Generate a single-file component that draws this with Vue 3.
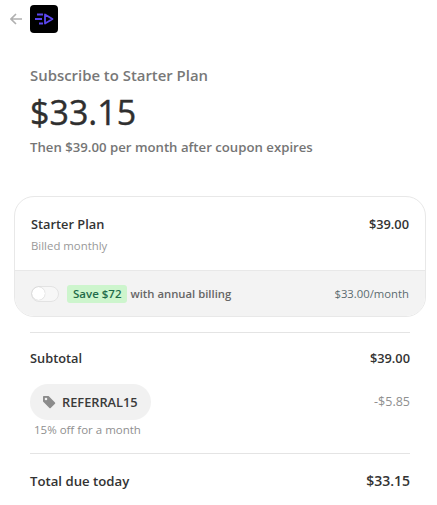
<template>
  <div class="page">
    <header class="topbar">
      <svg class="back" width="12" height="12" viewBox="0 0 12 12" fill="none" stroke="#b0b0b0" stroke-width="1.6">
        <path d="M12 6H1M6 1L1 6L6 11" />
      </svg>
      <div class="logo">
        <svg width="20" height="12" viewBox="0 0 20 12" fill="none" stroke="#5b46f0" stroke-width="1.8">
          <path d="M3 1.500H9M1 6H8M5 10.500H9" />
          <path d="M11 1.500L18.500 6L11 10.500Z" stroke-linejoin="round" />
        </svg>
      </div>
    </header>

    <section class="summary">
      <div class="subscribe">Subscribe to Starter Plan</div>
      <div class="price">$33.15</div>
      <div class="then">Then $39.00 per month after coupon expires</div>
    </section>

    <section class="card">
      <div class="card-top">
        <div class="row">
          <span class="strong">Starter Plan</span>
          <span class="strong">$39.00</span>
        </div>
        <div class="billed">Billed monthly</div>
      </div>
      <div class="card-bottom">
        <div class="annual">
          <span class="toggle"><span class="knob"></span></span>
          <span class="save">Save $72</span>
          <span class="with">with annual billing</span>
        </div>
        <span class="per-month">$33.00/month</span>
      </div>
    </section>

    <section class="totals">
      <div class="row">
        <span class="strong">Subtotal</span>
        <span class="strong">$39.00</span>
      </div>
      <div class="coupon-row">
        <div>
          <div class="pill">
            <svg width="14" height="14" viewBox="0 0 14 14">
              <path fill="#8c8c8c" d="M1 1.8C1 1.3 1.3 1 1.8 1H6.6L13 7.4C13.4 7.8 13.4 8.3 13 8.700L8.700 13C8.300 13.400 7.800 13.400 7.400 13L1 6.600ZM4 5.300A1.300 1.300 0 1 0 4 2.700A1.300 1.300 0 0 0 4 5.300Z" fill-rule="evenodd" />
            </svg>
            <span class="code">REFERRAL15</span>
          </div>
          <div class="off">15% off for a month</div>
        </div>
        <span class="discount">-$5.85</span>
      </div>
      <div class="row total">
        <span class="strong total-label">Total due today</span>
        <span class="strong total-amount">$33.15</span>
      </div>
    </section>
  </div>
</template>

<script setup>
</script>

<style scoped>
.page {
  width: 437px;
  height: 505px;
  overflow: hidden;
  background: #fff;
  color: #2f2f2f;
  font-family: "Open Sans", "Noto Sans", sans-serif;
  box-sizing: border-box;
}
.topbar {
  display: flex;
  align-items: center;
  gap: 8px;
  padding: 5px 0 0 10px;
}
.back {
  display: block;
}
.logo {
  width: 28px;
  height: 28px;
  border-radius: 4px;
  background: #000;
  display: flex;
  align-items: center;
  justify-content: center;
}
.summary {
  padding: 32px 30px 0;
}
.subscribe {
  font-size: 14.9px;
  font-weight: 600;
  line-height: 20px;
  color: #787878;
}
.price {
  font-size: 34px;
  font-weight: 400;
  -webkit-text-stroke: 0.4px #2f2f2f;
  line-height: 48px;
  margin-top: 3px;
}
.then {
  font-size: 13.2px;
  font-weight: 600;
  line-height: 18px;
  margin-top: 2px;
  color: #757575;
}
.card {
  margin: 40px 11px 0 14px;
  border: 1px solid #e8e8e8;
  border-radius: 20px;
  overflow: hidden;
}
.card-top {
  padding: 17px 16px 0;
  height: 74px;
  box-sizing: border-box;
  border-bottom: 1px solid #e8e8e8;
}
.row {
  display: flex;
  justify-content: space-between;
  align-items: center;
}
.strong {
  font-size: 12.8px;
  font-weight: 600;
  line-height: 20px;
  color: #333;
}
.billed {
  font-size: 11.4px;
  line-height: 16px;
  margin-top: 4px;
  color: #999;
}
.card-bottom {
  display: flex;
  justify-content: space-between;
  align-items: center;
  height: 45px;
  padding: 0 16px;
  background: #f3f3f3;
}
.annual {
  display: flex;
  align-items: center;
}
.toggle {
  width: 28px;
  height: 16px;
  box-sizing: border-box;
  border: 1px solid #e3e3e3;
  border-radius: 8px;
  background: #f7f7f7;
  display: flex;
  align-items: center;
  margin-right: 8px;
}
.knob {
  width: 13px;
  height: 13px;
  border-radius: 50%;
  background: #fff;
  box-shadow: 0 0 1px rgba(0, 0, 0, 0.3);
}
.save {
  font-size: 11.5px;
  font-weight: 600;
  line-height: 18px;
  padding: 0 6px;
  border-radius: 3px;
  background: #cdf5cd;
  color: #1f6b4a;
}
.with {
  font-size: 11.3px;
  font-weight: 600;
  margin-left: 3px;
  color: #666;
}
.per-month {
  font-size: 11.3px;
  color: #5b6b70;
}
.totals {
  margin: 15px 27px 0 30px;
  padding-top: 15px;
  border-top: 1px solid #e4e4e4;
}
.coupon-row {
  display: flex;
  justify-content: space-between;
  align-items: flex-start;
  margin-top: 16px;
  padding-bottom: 15px;
  border-bottom: 1px solid #e4e4e4;
}
.pill {
  display: inline-flex;
  align-items: center;
  gap: 6px;
  height: 36px;
  padding: 0 13px 0 12px;
  border-radius: 18px;
  background: #f1f1f1;
}
.code {
  font-size: 12.8px;
  font-weight: 600;
  color: #3a3a3a;
}
.off {
  font-size: 11.5px;
  line-height: 16px;
  margin: 2px 0 0 4px;
  color: #8f8f8f;
}
.discount {
  font-size: 12.5px;
  color: #8f8f8f;
  margin-top: 9px;
}
.total {
  margin-top: 17px;
}
.total-label {
  font-size: 13.2px;
}
.total-amount {
  font-size: 14px;
}
</style>

<style>
html, body {
  margin: 0;
  background: #fff;
}
</style>
